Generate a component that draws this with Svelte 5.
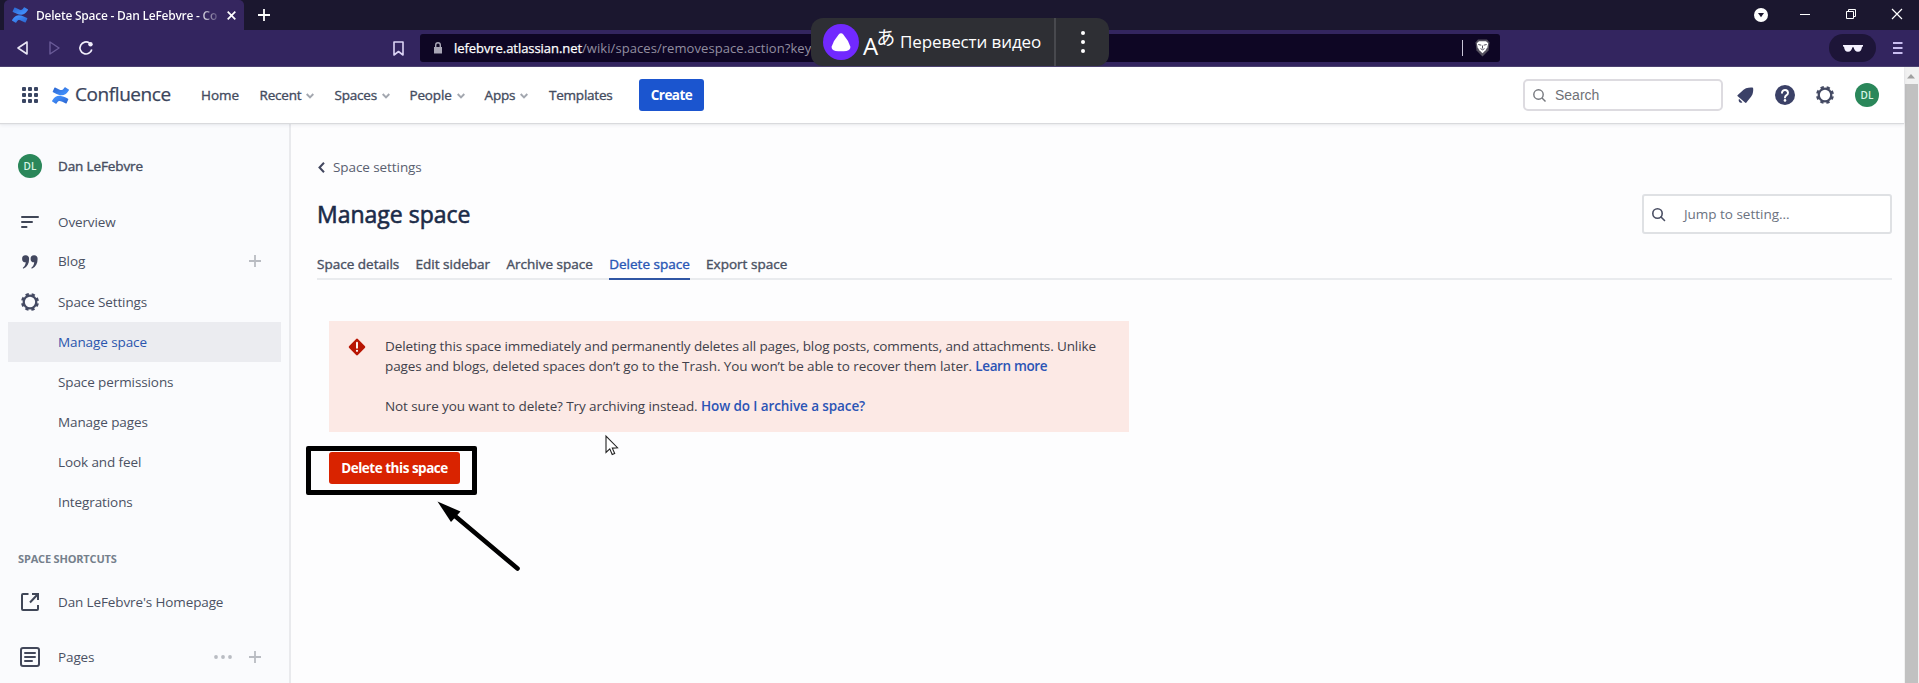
<script>
  const nav = [
    { label: 'Home', width: 58.5, ls: -0.04 },
    { label: 'Recent', width: 75, ls: -0.2, menu: true },
    { label: 'Spaces', width: 75, ls: -0.2, menu: true },
    { label: 'People', width: 75, ls: -0.17, menu: true },
    { label: 'Apps', width: 64.5, ls: -0.15, menu: true },
    { label: 'Templates', width: 90, ls: -0.22 }
  ];
  const settings = ['Manage space', 'Space permissions', 'Manage pages', 'Look and feel', 'Integrations'];
  const tabs = ['Space details', 'Edit sidebar', 'Archive space', 'Delete space', 'Export space'];
  const dots = [0, 1, 2, 3, 4, 5, 6, 7, 8];
</script>

{#snippet mark(size)}
  <svg width={size} height={size} viewBox="0 0 24 24">
    <defs>
      <linearGradient id="ga" x1="1" y1="1" x2="0.3" y2="0.3"><stop offset="0" stop-color="#2a62cc" /><stop offset="1" stop-color="#3f8bf7" /></linearGradient>
      <linearGradient id="gb" x1="0" y1="0" x2="0.7" y2="0.7"><stop offset="0" stop-color="#2a62cc" /><stop offset="1" stop-color="#3f8bf7" /></linearGradient>
    </defs>
    <path fill="url(#ga)" d="M.87 18.257c-.248.382-.53.875-.763 1.245a.764.764 0 0 0 .255 1.04l4.965 3.054a.764.764 0 0 0 1.058-.26c.199-.332.454-.763.733-1.221 1.967-3.247 3.945-2.853 7.508-1.146l4.957 2.337a.764.764 0 0 0 1.028-.382l2.364-5.346a.764.764 0 0 0-.382-1 599.851 599.851 0 0 1-4.965-2.361C10.911 10.97 5.224 11.185.87 18.257z" />
    <path fill="url(#gb)" d="M23.131 5.743c.249-.405.531-.875.764-1.25a.764.764 0 0 0-.256-1.034L18.675.404a.764.764 0 0 0-1.058.26c-.195.335-.451.763-.734 1.225-1.966 3.246-3.945 2.850-7.508 1.146L4.437.694a.764.764 0 0 0-1.027.382L1.046 6.422a.764.764 0 0 0 .382 1c1.039.49 3.105 1.467 4.965 2.361 6.698 3.246 12.392 3.029 16.738-4.040z" />
  </svg>
{/snippet}

{#snippet gear()}
  <svg width="20" height="20" viewBox="0 0 20 20" fill="none" stroke="#444a63">
    <circle cx="10" cy="10" r="6.300" stroke-width="2.300" />
    <circle cx="10" cy="10" r="7.800" stroke-width="2.400" stroke-dasharray="3.300 2.826" stroke-dashoffset="-1.400" />
  </svg>
{/snippet}

{#snippet plus()}
  <svg width="12" height="12" viewBox="0 0 12 12" stroke="#b9bcc2" stroke-width="1.800"><path d="M6 0v12M0 6h12" /></svg>
{/snippet}

<div class="window">
  <div class="tabstrip">
    <div class="tab">
      {@render mark(16)}
      <span class="tab-title">Delete Space - Dan LeFebvre - Co</span>
      <svg width="9" height="9" viewBox="0 0 9 9" stroke="#fff" stroke-width="1.700"><path d="M.7.7l7.600 7.600M8.300.7.7 8.300" /></svg>
    </div>
    <svg class="newtab" width="12" height="12" viewBox="0 0 12 12" stroke="#fff" stroke-width="1.800"><path d="M6 0v12M0 6h12" /></svg>
    <div class="winctl">
      <svg width="14" height="14" viewBox="0 0 14 14"><circle cx="7" cy="7" r="7" fill="#fff" /><path d="M4 5h6L7 9.300z" fill="#1b172f" /></svg>
      <svg width="10" height="10" viewBox="0 0 10 10" stroke="#fff"><path d="M0 5.500h10" /></svg>
      <svg width="10" height="10" viewBox="0 0 10 10" stroke="#fff" fill="none"><path d="M.5 2.500h7v7h-7zM2.500 2.500v-2h7v7h-2" /></svg>
      <svg width="10" height="10" viewBox="0 0 10 10" stroke="#fff" stroke-width="1.200"><path d="M0 0l10 10M10 0 0 10" /></svg>
    </div>
  </div>

  <div class="toolbar">
    <svg width="11" height="14" viewBox="0 0 11 14" fill="none" stroke="#e9e6f5" stroke-width="1.600" stroke-linejoin="round"><path d="M10 1v12L1 7z" /></svg>
    <svg class="fwd" width="11" height="14" viewBox="0 0 11 14" fill="none" stroke="#6a5b98" stroke-width="1.400" stroke-linejoin="round"><path d="M1 1v12l9-6z" /></svg>
    <svg class="reload" width="14" height="14" viewBox="0 0 14 14" fill="none" stroke="#f1eefb" stroke-width="1.700"><path d="M12.800 8.500A6 6 0 1 1 10.500 2.100" /><circle cx="11.500" cy="3.300" r="2.200" fill="#f1eefb" stroke="none" /></svg>
    <svg class="bookmark" width="11" height="15" viewBox="0 0 11 15" fill="none" stroke="#dcd4f5" stroke-width="1.600" stroke-linejoin="round"><path d="M1 1h9v13l-4.500-3.500L1 14z" /></svg>
    <div class="address">
      <svg width="8" height="12" viewBox="0 0 8 12"><path d="M0 5h8v6.500H0z" fill="#a9a6b6" /><path d="M1.700 5V3a2.300 2.300 0 0 1 4.600 0v2" fill="none" stroke="#a9a6b6" stroke-width="1.400" /></svg>
      <span class="url"><b>lefebvre.atlassian.net</b><span>/wiki/spaces/removespace.action?key</span></span>
      <i></i>
      <svg width="15" height="18" viewBox="0 0 15 18">
        <path d="M3 .5h9l2.500 3-1 8L7.500 17.500l-6-6-1-8z" fill="#55515f" />
        <path d="M4 2.300h7l2.200 2-.8 4-1.800 2.900-3.100 3-3.100-3L2.600 8.300l-.8-4z" fill="#fff" />
        <path d="M3.300 5.500l3 .7M11.700 5.500l-3 .7M7.500 6.500v3M5.500 9.600l2 1.200 2-1.200" stroke="#55515f" fill="none" />
      </svg>
    </div>
    <div class="private">
      <svg width="20" height="7" viewBox="0 0 20 7"><path d="M0 0h20v1.500l-1 .3c-.3 3-1.500 5-4 5s-3.800-1.800-4.400-4.500h-1.200C8.800 5 7.500 6.800 5 6.800s-3.700-2-4-5L0 1.500z" fill="#f4f1ff" /></svg>
    </div>
    <svg class="burger" width="10" height="12" viewBox="0 0 10 12" stroke="#c9bdf0" stroke-width="1.800"><path d="M0 1h9.500M0 6h9.500M0 11h9.500" /></svg>
  </div>

  <div class="page">
    <div class="app">
      <header>
        <div class="grid">{#each dots as d (d)}<i></i>{/each}</div>
        <span class="brandmark">{@render mark(17)}</span>
        <span class="brand">Confluence</span>
        <nav>
          {#each nav as n (n.label)}
            <span class="nav-item" style="width:{n.width}px;letter-spacing:{n.ls}px">
              {n.label}
              {#if n.menu}<svg width="8" height="6" viewBox="0 0 8 6" fill="none" stroke="#a3a7af" stroke-width="1.900"><path d="M.7 1 4 4.400 7.300 1" /></svg>{/if}
            </span>
          {/each}
        </nav>
        <button class="create">Create</button>
        <div class="search">
          <svg width="13" height="13" viewBox="0 0 13 13" fill="none" stroke="#75777d" stroke-width="1.400"><circle cx="5.500" cy="5.500" r="4.700" /><path d="M9 9l3.500 3.500" /></svg>
          Search
        </div>
        <svg class="bell" width="17" height="17" viewBox="0 0 17 17" fill="#3b4167"><path d="M.5 8.200C3 6.600 5.500 2.800 9 1.300c2.200-.7 5.500-1 7-.5.500 1.500.2 4.500-.6 6.700-1.500 3.300-4.500 5.500-5.900 8-.5.600-1 .6-1.500.1L.7 9.200c-.4-.4-.5-.7-.2-1z" /><path d="M2 11.800l3.400 3.400c-1.200.8-2.500.6-3.100-.1-.7-.9-.8-2.100-.3-3.300z" /></svg>
        <svg class="help" width="20" height="20" viewBox="0 0 20 20"><circle cx="10" cy="10" r="10" fill="#3b4167" /><path d="M7 7.800a3 2.800 0 1 1 4.600 2.300c-1 .7-1.600 1.100-1.600 2.300" fill="none" stroke="#fff" stroke-width="2" stroke-linecap="round" /><circle cx="10" cy="15.400" r="1.300" fill="#fff" /></svg>
        <span class="hgear">{@render gear()}</span>
        <span class="avatar">DL</span>
      </header>

      <div class="body">
        <aside>
          <div class="row owner"><span class="ic"><span class="avatar">DL</span></span><span>Dan LeFebvre</span></div>
          <div class="row overview">
            <span class="ic"><svg width="18" height="12" viewBox="0 0 18 12" stroke="#3f4657" stroke-width="2" stroke-linecap="round"><path d="M1 1h16M1 6h10M1 11h4.500" /></svg></span>
            <span>Overview</span>
          </div>
          <div class="row blog">
            <span class="ic"><svg class="quote" width="16" height="14" viewBox="0 0 16 14"><path d="M3.500.3a3.300 3.300 0 0 1 3.600 3.700c0 4.500-1.800 7.800-5.400 9.500-.8.200-1.100-.5-.6-1 1.600-1.200 2.500-3 2.600-5.200A3.500 3.500 0 1 1 3.500.3zM12 .3A3.300 3.300 0 0 1 15.600 4c0 4.500-1.800 7.800-5.400 9.500-.8.200-1.100-.5-.6-1 1.600-1.200 2.500-3 2.600-5.200A3.500 3.500 0 1 1 12 .3z" fill="#42475f" /></svg></span>
            <span>Blog</span><span class="end">{@render plus()}</span>
          </div>
          <div class="row settings"><span class="ic">{@render gear()}</span><span>Space Settings</span></div>
          {#each settings as s, i (s)}
            <div class="sub" class:active={i === 0}>{s}</div>
          {/each}
          <h4>SPACE SHORTCUTS</h4>
          <div class="row home">
            <span class="ic"><svg width="20" height="20" viewBox="0 0 20 20" fill="none" stroke="#3f4657" stroke-width="2"><path d="M8.500 2H3a1 1 0 0 0-1 1v14a1 1 0 0 0 1 1h14a1 1 0 0 0 1-1v-4M12 2h6v6M18 2l-8 8.500" /></svg></span>
            <span>Dan LeFebvre's Homepage</span>
          </div>
          <div class="row pages">
            <span class="ic"><svg width="20" height="20" viewBox="0 0 20 20" fill="none" stroke="#42475a" stroke-width="2"><rect x="1" y="1" width="18" height="18" rx="2" /><path d="M5 6h10M5 10h10M5 14h7" stroke-linecap="round" /></svg></span>
            <span>Pages</span>
            <span class="end"><svg width="18" height="4" viewBox="0 0 18 4" fill="#b9bcc2"><circle cx="2" cy="2" r="1.900" /><circle cx="9" cy="2" r="1.900" /><circle cx="16" cy="2" r="1.900" /></svg>{@render plus()}</span>
          </div>
        </aside>

        <main>
          <div class="crumb">
            <svg width="7" height="11" viewBox="0 0 7 11" fill="none" stroke="#42475f" stroke-width="2"><path d="M6 .8 1.500 5.500 6 10.200" /></svg>
            Space settings
          </div>
          <div class="title">
            <h1>Manage space</h1>
            <div class="jump">
              <svg width="13" height="13" viewBox="0 0 13 13" fill="none" stroke="#4a4f63" stroke-width="1.600"><circle cx="5.500" cy="5.500" r="4.700" /><path d="M9 9l3.500 3.500" stroke-linecap="round" /></svg>
              Jump to setting...
            </div>
          </div>
          <div class="tabs">
            {#each tabs as t (t)}<span class:on={t === 'Delete space'}>{t}</span>{/each}
          </div>
          <section class="alert">
            <svg width="18" height="18" viewBox="0 0 18 18"><path d="M7.900 1.200a1.500 1.500 0 0 1 2.200 0l6.700 6.700a1.500 1.500 0 0 1 0 2.200l-6.700 6.700a1.500 1.500 0 0 1-2.200 0L1.200 10.100a1.500 1.500 0 0 1 0-2.200z" fill="#b81503" /><path d="M9 4.800v5" stroke="#fff" stroke-width="1.900" stroke-linecap="round" /><circle cx="9" cy="12.800" r="1.100" fill="#fff" /></svg>
            <div>
              <p class="l1">Deleting this space immediately and permanently deletes all pages, blog posts, comments, and attachments. Unlike</p>
              <p class="l2"><span>pages and blogs, deleted spaces don’t go to the Trash. You won’t be able to recover them later.</span> <a class="learn" href="#learn">Learn more</a></p>
              <p class="l3"><span>Not sure you want to delete? Try archiving instead.</span> <a href="#archive">How do I archive a space?</a></p>
            </div>
          </section>
          <button class="delete">Delete this space</button>
        </main>
      </div>
    </div>
    <div class="scroll"><svg width="8" height="5" viewBox="0 0 8 5" fill="#a0a0a0"><path d="M4 0l4 4.500H0z" /></svg><i></i></div>
  </div>

  <div class="translate">
    <span class="alice"><svg width="20" height="19" viewBox="0 0 20 19"><path d="M7.500 1.700Q10-1 12.500 1.700 17.500 7.500 19.300 13.500 20 17 15.500 17.900q-5.500.9-11 0Q0 17 .7 13.500 2.500 7.500 7.500 1.700z" fill="#fff" /></svg></span>
    <span class="glyphs"><span>A</span><b>あ</b></span>
    <span class="label">Перевести видео</span>
    <span class="more"><i></i><i></i><i></i></span>
  </div>

  <div class="frame"></div>
  <svg class="arrow" width="86" height="74" viewBox="0 0 86 74"><path d="M18 15l62.500 52.500" stroke="#000" stroke-width="4.600" stroke-linecap="round" /><path d="M.5.500 23.500 10.500 14 21z" /></svg>
  <svg class="cursor" width="14" height="21" viewBox="0 0 14 21"><path d="M1 1v16.500l3.800-3.600 2.400 5.600 2.500-1-2.400-5.400 5.200-.4z" fill="#fff" stroke="#222" stroke-width="1.100" /></svg>
</div>

<style>
  :global(body) { margin: 0; overflow: hidden; }
  .window { position: relative; width: 1919px; height: 683px; overflow: hidden; display: flex; flex-direction: column; background: #fdfdfe; font-family: "Open Sans", "Noto Sans", sans-serif; font-size: 13.5px; letter-spacing: -.12px; color: #4a5163; white-space: nowrap; }
  .window :global(*) { box-sizing: border-box; }
  svg { display: block; flex: none; overflow: visible; }

  .tabstrip { height: 30px; flex: none; display: flex; align-items: center; background: #1b172f; padding-left: 4px; }
  .tab { width: 240px; height: 30px; background: #35265f; border-radius: 5px 5px 0 0; display: flex; align-items: center; padding: 0 0 0 8px; }
  .tab-title { margin-left: 8px; width: 191px; font-size: 12px; font-weight: 600; letter-spacing: -.25px; color: transparent; background: linear-gradient(90deg, #fff 162px, #35265f 186px); background-clip: text; -webkit-background-clip: text; }
  .newtab { margin-left: 14px; }
  .winctl { margin-left: auto; display: flex; align-items: center; gap: 36px; padding-right: 17px; margin-top: -2px; }
  .winctl svg:first-child { margin-right: -4px; margin-top: 1px; }

  .toolbar { height: 37px; flex: none; display: flex; align-items: center; background: #33255f; padding: 0 16px 0 17px; border-bottom: 1px solid #4c4270; }
  .fwd { margin-left: 21px; }
  .reload { margin-left: 19px; }
  .bookmark { margin-left: 300px; }
  .address { margin-left: 16px; width: 1080px; height: 28px; border-radius: 3px; background: #0e0624; display: flex; align-items: center; padding: 0 10px 0 14px; }
  .url { margin-left: 12px; font-size: 13px; letter-spacing: -.06px; }
  .url b { font-weight: 400; color: #fff; -webkit-text-stroke: .25px #fff; }
  .url span { color: #928ea0; letter-spacing: .07px; }
  .address i { margin-left: auto; width: 1px; height: 16px; background: #c9c5d8; margin-right: 12px; }
  .private { margin-left: auto; width: 47px; height: 28px; border-radius: 14px; background: #1d1538; display: flex; justify-content: center; align-items: center; }
  .burger { margin-left: 17px; }

  .page { flex: 1; min-height: 0; display: flex; }
  .app { flex: 1; min-width: 0; display: flex; flex-direction: column; }
  .scroll { width: 15px; background: #f1f1f1; display: flex; flex-direction: column; align-items: center; }
  .scroll svg { margin: 7px 0 5px -2px; }
  .scroll i { width: 13px; flex: 1; background: #c1c1c1; }

  header { height: 56px; flex: none; display: flex; align-items: center; background: #fff; padding-left: 22px; padding-right: 25px; position: relative; box-shadow: 0 1px 1px #d9dadd, 0 2px 4px rgba(9, 30, 66, .08); }
  .grid { display: grid; grid-template-columns: repeat(3, 4px); grid-template-rows: repeat(3, 4px); gap: 2px; }
  .grid i { width: 4px; height: 4px; border-radius: 1px; background: #3a4663; }
  .brandmark { margin-left: 14px; }
  .brand { margin-left: 6px; width: 126px; font-size: 19px; letter-spacing: -.42px; color: #3b455c; margin-top: -2px; -webkit-text-stroke: .25px #3b455c; }
  nav { display: flex; width: 438px; }
  .nav-item { display: flex; flex: none; align-items: center; gap: 5px; color: #444c60; -webkit-text-stroke: .35px #444c60; }
  .nav-item svg { margin-top: 1px; }
  .create { font: 700 13.5px "Open Sans", sans-serif; letter-spacing: -.55px; width: 65px; height: 32px; border: 0; border-radius: 3px; background: #1b55cf; color: #fff; padding: 0; }
  .search { margin-left: auto; width: 200px; height: 32px; border: 2px solid #dddbe0; border-radius: 5px; display: flex; align-items: center; gap: 9px; padding-left: 8px; font: 14px "Liberation Sans", sans-serif; letter-spacing: 0; color: #6f7177; }
  .bell { margin-left: 14px; }
  .help { margin-left: 21px; }
  .hgear { margin-left: 20px; }
  .hgear + .avatar { margin-left: 20px; }
  .avatar { width: 24px; height: 24px; border-radius: 50%; background: #2a875a; color: #d8f5e6; font-size: 10px; font-weight: 600; letter-spacing: 0; display: flex; align-items: center; justify-content: center; }

  .body { flex: 1; min-height: 0; display: flex; }
  aside { width: 291px; flex: none; background: #fafbfd; border-right: 2px solid #e9eaed; padding: 23px 0 0 8px; }
  .row { display: flex; align-items: center; height: 40px; padding-right: 28px; }
  .ic { width: 44px; display: flex; justify-content: center; margin-right: 6px; }
  .owner > span:last-child { -webkit-text-stroke: .4px #444c60; }
  .overview { margin-top: 16px; }
  .blog { margin-top: -1px; }
  .quote { margin-top: 2px; }
  .settings { margin-top: 1px; }
  .end { margin-left: auto; display: flex; align-items: center; gap: 17px; }
  .sub { height: 40px; width: 273px; line-height: 40px; padding-left: 50px; letter-spacing: -.1px; }
  .sub.active { background: #ebecf0; color: #2a55ad; }
  h4 { margin: 27px 0 0 10px; font-size: 11px; line-height: 20px; font-weight: 700; letter-spacing: -.17px; color: #75808c; }
  .home { margin-top: 13px; }
  .pages { margin-top: 15px; }

  main { flex: 1; min-width: 0; padding: 34px 12px 0 26px; }
  .crumb { display: flex; align-items: center; gap: 8px; height: 20px; padding-left: 1px; color: #5a6070; letter-spacing: -.08px; }
  .title { display: flex; justify-content: space-between; align-items: center; height: 40px; margin-top: 17px; }
  h1 { margin: 0; font-size: 23px; font-weight: 400; letter-spacing: 0; color: #1b2b48; -webkit-text-stroke: .6px #1b2b48; }
  .jump { width: 250px; height: 40px; border: 2px solid #dfe1e4; border-radius: 3px; background: #fff; display: flex; align-items: center; gap: 19px; padding-left: 8px; color: #6b7280; letter-spacing: -.02px; }
  .tabs { display: flex; gap: 16.300px; height: 46px; border-bottom: 2px solid #e9ebee; }
  .tabs span { height: 46px; padding-top: 20px; line-height: 20px; letter-spacing: .01px; color: #4a5163; -webkit-text-stroke: .4px currentColor; }
  .tabs .on { color: #2a57b5; border-bottom: 2px solid #2f55a4; }
  .alert { margin: 41px 0 0 12px; width: 800px; height: 111px; background: #fce9e5; display: flex; gap: 19px; padding: 15px 0 0 19px; color: #403f4a; }
  .alert svg { margin-top: 2px; }
  p { margin: 0; line-height: 20px; }
  .l1 { letter-spacing: -.12px; }
  .l2 { letter-spacing: -.075px; }
  .l3 { margin-top: 20px; letter-spacing: -.1px; }
  a { color: #2b54b5; text-decoration: none; font-weight: 600; letter-spacing: -.1px; }
  .learn { letter-spacing: -.38px; }
  .delete { display: block; margin: 20px 0 0 12px; width: 131px; height: 32px; border: 0; padding: 0; border-radius: 3px; background: #d92300; color: #fff; font: 700 13.5px "Open Sans", sans-serif; letter-spacing: -.48px; }

  .translate { position: absolute; left: 811px; top: 18px; width: 298px; height: 48px; border-radius: 12px; background: #2e2f34; display: flex; align-items: center; padding-left: 12px; color: #fff; }
  .alice { width: 36px; height: 36px; border-radius: 50%; background: #7129ff; display: flex; align-items: center; justify-content: center; }
  .glyphs { display: flex; margin-left: 4px; width: 33px; font: 400 24px/30px "Open Sans", sans-serif; letter-spacing: 0; }
  .glyphs span { margin-top: 7px; }
  .glyphs b { font: 400 19px/24px "Noto Sans CJK JP", sans-serif; margin: 1px 0 0 -2px; }
  .label { margin-left: 4px; margin-top: -2px; width: 154px; font-size: 17px; letter-spacing: -.1px; }
  .more { flex: 1; height: 48px; border-left: 2px solid #48494e; display: flex; flex-direction: column; align-items: center; justify-content: center; gap: 5px; }
  .more i { width: 4px; height: 4px; border-radius: 50%; background: #fff; }

  .frame { position: absolute; left: 306px; top: 446px; width: 171px; height: 49px; border: 5px solid #000; border-radius: 2px; }
  .arrow { position: absolute; left: 437px; top: 501px; }
  .cursor { position: absolute; left: 605px; top: 435px; }
</style>
